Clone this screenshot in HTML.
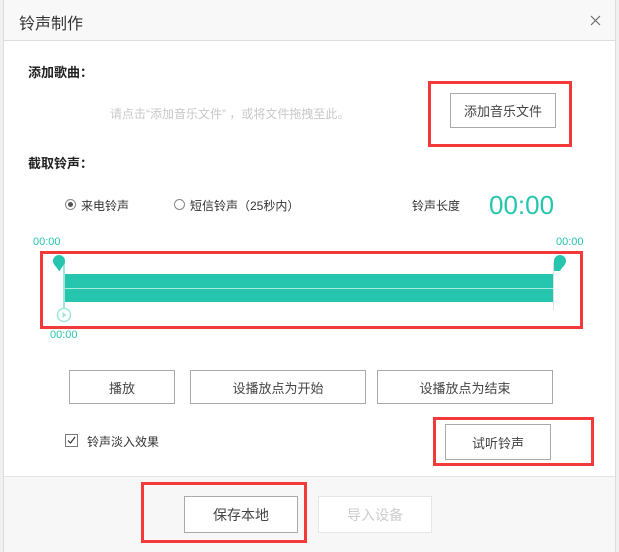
<!DOCTYPE html>
<html><head><meta charset="utf-8"><style>
*{margin:0;padding:0;box-sizing:border-box}
body{width:619px;height:552px;position:relative;background:#fff;font-family:"Liberation Sans","Noto Sans CJK SC",sans-serif;overflow:hidden;color:#333}
.a{position:absolute;white-space:nowrap}
.btn{position:absolute;border:1px solid #aaa;background:#fff;font-size:13px;color:#444;display:flex;align-items:center;justify-content:center}
.red{position:absolute;border:3px solid #f23a3a}
.t{color:#26c6ae}
</style></head><body>
<div class="a" style="left:0;top:0;width:619px;height:552px;background:#f0f0f0"></div>
<div class="a" style="left:3px;top:0;width:613px;height:552px;background:#fff;border-left:1px solid #ddd;border-right:1px solid #ddd"></div>
<div class="a" style="left:4px;top:0;width:611px;height:41px;background:#f8f8f8;border-bottom:1px solid #ddd"></div>
<div class="a" style="left:19px;top:10px;font-size:16px;color:#333">铃声制作</div>
<svg class="a" style="left:590px;top:15px" width="11" height="11"><path d="M1 1L10 10M10 1L1 10" stroke="#666" stroke-width="1.1"/></svg>
<div class="a" style="left:28px;top:62px;font-size:13px;font-weight:bold;color:#222">添加歌曲：</div>
<div class="a" style="left:110px;top:105px;font-size:12px;color:#c8c8c8">请点击“添加音乐文件” ，或将文件拖拽至此。</div>
<div class="btn" style="left:450px;top:93px;width:106px;height:35px">添加音乐文件</div>
<div class="red" style="left:428px;top:81px;width:144px;height:66px"></div>
<div class="a" style="left:28px;top:153px;font-size:13px;font-weight:bold;color:#222">截取铃声：</div>
<div class="a" style="left:65px;top:199px;width:11px;height:11px;border:1px solid #888;border-radius:50%"><div style="position:absolute;left:2px;top:2px;width:5px;height:5px;border-radius:50%;background:#555"></div></div>
<div class="a" style="left:81px;top:197px;font-size:12px">来电铃声</div>
<div class="a" style="left:174px;top:199px;width:11px;height:11px;border:1px solid #888;border-radius:50%"></div>
<div class="a" style="left:190px;top:197px;font-size:12px">短信铃声（25秒内）</div>
<div class="a" style="left:412px;top:197px;font-size:12px">铃声长度</div>
<div class="a t" style="left:489px;top:190px;font-size:26px">00:00</div>
<div class="a t" style="left:33px;top:236px;font-size:11px">00:00</div>
<div class="a t" style="left:556px;top:236px;font-size:11px">00:00</div>
<div class="a" style="left:64px;top:274px;width:490px;height:28px;background:#26c6ae"></div>
<div class="a" style="left:64px;top:288px;width:490px;height:1px;background:#a8ece0"></div>
<div class="a" style="left:63px;top:262px;width:2px;height:46px;background:#9fe5d9"></div>
<div class="a" style="left:553px;top:262px;width:1px;height:48px;background:#e0e0e0"></div>
<svg class="a" style="left:52px;top:254px" width="14" height="18"><path d="M7 1a6 6 0 0 1 6 6c0 4-4 6-5 10L7 17C5 13 1 11 1 7a6 6 0 0 1 6-6z" fill="#26c6ae"/></svg>
<svg class="a" style="left:553px;top:254px" width="14" height="18"><path d="M7 1a6 6 0 0 1 6 6c0 4-4 6-6 10L1 17V7a6 6 0 0 1 6-6z" fill="#26c6ae"/></svg>
<svg class="a" style="left:56px;top:307px" width="16" height="16"><circle cx="8" cy="8" r="6.5" fill="#fff" stroke="#9fe5d9" stroke-width="1.5"/><path d="M6.5 5l4 3-4 3z" fill="#9fe5d9"/></svg>
<div class="a t" style="left:50px;top:329px;font-size:11px">00:00</div>
<div class="red" style="left:40px;top:251px;width:543px;height:78px"></div>
<div class="btn" style="left:69px;top:370px;width:106px;height:34px">播放</div>
<div class="btn" style="left:190px;top:370px;width:176px;height:34px">设播放点为开始</div>
<div class="btn" style="left:377px;top:370px;width:176px;height:34px">设播放点为结束</div>
<svg class="a" style="left:65px;top:434px" width="13" height="13"><rect x="0.5" y="0.5" width="12" height="12" fill="#fff" stroke="#777"/><path d="M3 6.5l2.5 2.5L10 3" stroke="#333" stroke-width="1.2" fill="none"/></svg>
<div class="a" style="left:87px;top:433px;font-size:12px">铃声淡入效果</div>
<div class="btn" style="left:445px;top:424px;width:106px;height:36px">试听铃声</div>
<div class="red" style="left:433px;top:417px;width:161px;height:49px"></div>
<div class="a" style="left:4px;top:476px;width:611px;height:76px;background:#f7f7f7;border-top:1px solid #e3e3e3"></div>
<div class="btn" style="left:184px;top:496px;width:114px;height:37px;font-size:14px">保存本地</div>
<div class="btn" style="left:318px;top:496px;width:114px;height:37px;font-size:14px;border-color:#e6e6e6;color:#ccc">导入设备</div>
<div class="red" style="left:141px;top:482px;width:166px;height:61px"></div>
</body></html>
